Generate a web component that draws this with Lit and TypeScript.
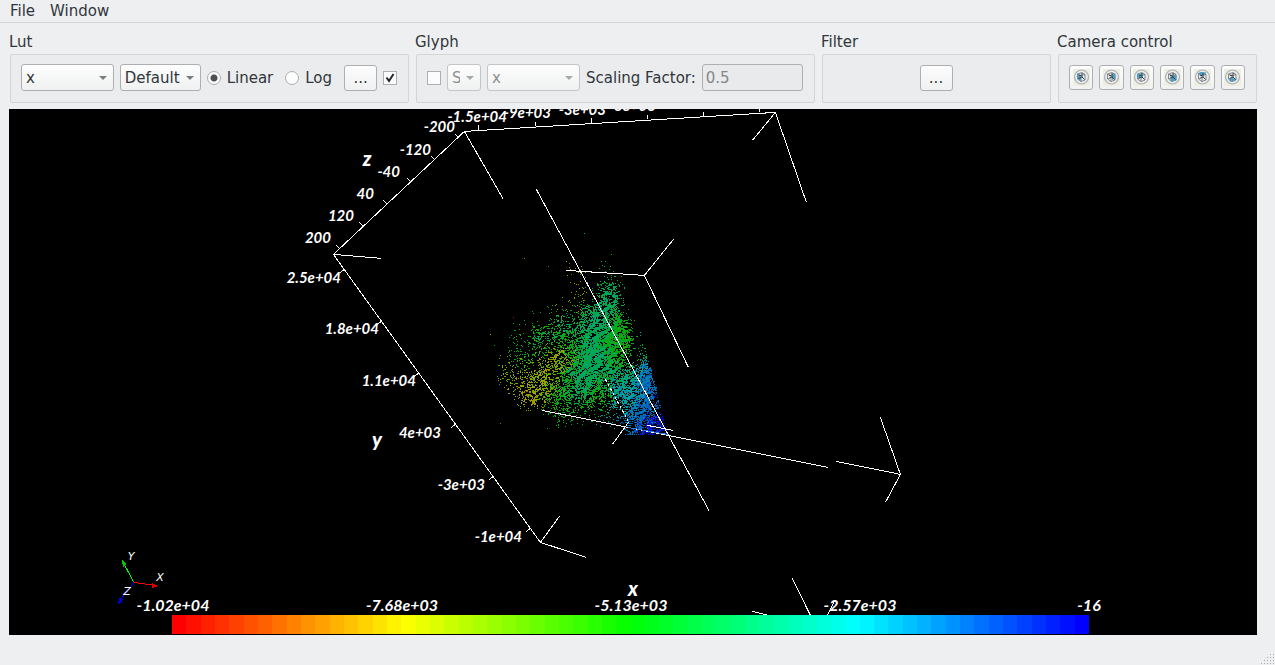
import { LitElement, html, svg, css } from "lit";
import { customElement } from "lit/decorators.js";

type Segment = [number, number, number, number];
type Label = [string, number, number];

// Edges of the axes cube, in viewport units.
const EDGES: Segment[] = [
  [333, 254, 464, 131], [464, 131, 775, 112], [464, 131, 503, 199],
  [775, 112, 752, 140], [775, 112, 806, 202], [333, 254, 381, 258],
  [333, 254, 540, 542], [540, 542, 559, 516], [540, 542, 586, 557],
  [536, 189, 709, 511], [566, 270, 644, 275], [644, 275, 673, 239],
  [644, 275, 688, 367], [542, 410, 828, 467], [836, 461, 900, 474],
  [900, 474, 880, 417], [900, 474, 885, 502], [628, 422, 612, 444],
  [647, 425, 673, 430], [792, 578, 810, 615], [752, 611, 768, 615],
  [834, 601, 827, 615],
];

const TICKS: Segment[] = [
  [478, 125, 478, 130], [535, 122, 535, 126], [591, 118, 591, 123],
  [647, 115, 647, 119], [703, 112, 703, 116], [759, 108, 759, 112],
  [455, 134, 458, 137], [431, 156, 434, 159], [407, 178, 410, 181],
  [383, 200, 387, 204], [359, 222, 363, 226], [336, 245, 340, 249],
  [340, 272, 344, 269], [377, 324, 381, 321], [414, 376, 418, 373],
  [451, 427, 455, 424], [489, 479, 493, 476], [526, 531, 530, 528],
];

// Tick labels: text, right edge, baseline.
const LABELS: Label[] = [
  ["-1.5e+04", 507, 122], ["-9e+03", 551, 118], ["-3e+03", 606, 115], ["3e+03", 656, 111],
  ["-200", 455, 132], ["-120", 431, 155], ["-40", 400, 177],
  ["40", 374, 199], ["120", 354, 221], ["200", 331, 243],
  ["2.5e+04", 341, 283], ["1.8e+04", 379, 334], ["1.1e+04", 416, 386],
  ["4e+03", 441, 438], ["-3e+03", 485, 490], ["-1e+04", 522, 542],
];

// Colour bar labels: text, centre, baseline.
const BAR_LABELS: Label[] = [
  ["-1.02e+04", 173, 611], ["-7.68e+03", 402, 611], ["-5.13e+03", 631, 611],
  ["-2.57e+03", 860, 611], ["-16", 1089, 611],
];

const TITLES: Label[] = [["z", 367, 166], ["y", 377, 447], ["x", 633, 596]];

// Particle density and dominant colour on a 10-unit grid whose origin is (480, 225).
const CELL = 10;
const DENSITY = [
  "0000000000000000000",
  "0000000000000000000",
  "0000000000000000000",
  "0000000010102000000",
  "0000000102212000000",
  "0000000012203200000",
  "0000000112326500000",
  "0000000122337600000",
  "0000011233567620000",
  "0000112444677740000",
  "0002145555788870000",
  "0103254555888881000",
  "0013344566888850400",
  "0024434667888741610",
  "0034445567888765820",
  "0034466567876677960",
  "0013566666766787960",
  "0002564565655666850",
  "0000232443323357753",
  "0000000332233357775",
  "0000000001000037777",
];
const TONES = [
  "ggggggggggggggggggg",
  "ggggggggggggggggggg",
  "ggggggggggggggggggg",
  "ggggggggyyytttttttt",
  "gggggggggyytttttttt",
  "gggggggggyygttttttt",
  "gggggggyyyygttttttt",
  "gggggggyyygttttgggg",
  "ggggggggygttttggggg",
  "gggggggttgtttgggggg",
  "gggggggtgttttgggggg",
  "gggggtggggttggggggg",
  "gggggggyggtttggggcc",
  "lllgglyyygtttgggcbb",
  "yylyllylgttttgtcbbb",
  "yylyyyylgtttgctcbbb",
  "ooyyyylggttggcccbbb",
  "ooyyoylggtgggcccbbd",
  "oooyyygggggggccbbbd",
  "ooyyyggggggcccbbbdd",
  "ggggggggggggccbbddd",
];
const COVERAGE = [0, 0.014, 0.05, 0.14, 0.28, 0.42, 0.58, 0.74, 0.9, 1];
const PALETTE: Record<string, string[]> = {
  o: ["#a87800", "#a86000", "#9a9400"],
  y: ["#a8a400", "#96a800", "#a88c00", "#5fa800"],
  l: ["#6fa800", "#30a800", "#8ca800"],
  g: ["#00a800", "#08a818", "#00a830", "#20a800"],
  t: ["#00a84c", "#00a860", "#00a838", "#00a474"],
  c: ["#00a4a0", "#009cac", "#00a88c", "#0084b4"],
  b: ["#0070b8", "#0060b8", "#0080b8", "#0050c0"],
  d: ["#0010c8", "#0028c0", "#0000dc"],
};

function buildParticles(): Map<string, string> {
  let seed = 20817;
  const random = () => {
    seed = (Math.imul(seed, 1664525) + 1013904223) >>> 0;
    return seed / 4294967296;
  };
  const level = (c: number, r: number) => COVERAGE[Number(DENSITY[r]?.[c] ?? 0)];
  const paths = new Map<string, string>();
  const rows = DENSITY.length;
  const cols = DENSITY[0].length;
  for (let y = 0; y < rows * CELL; y++) {
    for (let x = 0; x < cols * CELL; x++) {
      const gx = x / CELL - 0.5;
      const gy = y / CELL - 0.5;
      const c = Math.floor(gx);
      const r = Math.floor(gy);
      const fx = gx - c;
      const fy = gy - r;
      const density =
        (level(c, r) * (1 - fx) + level(c + 1, r) * fx) * (1 - fy) +
        (level(c, r + 1) * (1 - fx) + level(c + 1, r + 1) * fx) * fy;
      const streak = 0.85 + 0.3 * Math.sin((x + y) * 0.55 + Math.sin(y * 0.3) * 2);
      if (x > 130 && y > 209) continue;
      // The cloud narrows to a straight edge on its right-hand side.
      if (y > 120 && x > 172 + (y - 150) * 0.25) continue;
      if (random() > density * streak) continue;
      const tr = Math.min(rows - 1, Math.max(0, Math.floor(gy + 0.5 + (random() - 0.5) * 1.6)));
      const tc = Math.min(cols - 1, Math.max(0, Math.floor(gx + 0.5 + (random() - 0.5) * 1.6)));
      const shades = PALETTE[TONES[tr][tc]];
      const shade = shades[Math.floor(random() * shades.length)];
      const w = random() < density * 0.5 ? 2 : 1;
      paths.set(shade, (paths.get(shade) ?? "") + `M${480 + x} ${225 + y}h${w}v1h-${w}z`);
    }
  }
  for (const [x, y, shade] of [
    [584, 233, "#00a838"], [524, 258, "#a87800"], [513, 317, "#a81000"], [490, 334, "#96a800"],
    [500, 423, "#a86000"], [640, 332, "#00a4a0"], [640, 335, "#00a4a0"], [494, 345, "#00a800"],
  ] as [number, number, string][]) {
    paths.set(shade, (paths.get(shade) ?? "") + `M${x} ${y}h1v1h-1z`);
  }
  return paths;
}

const PARTICLES = [...buildParticles()];
const BANDS = Array.from({ length: 64 }, (_, i) => `hsl(${(240 * i) / 63} 100% 50%)`);

const lines = (segments: Segment[]) =>
  segments.map(([a, b, c, d]) => `M${a} ${b}L${c} ${d}`).join("");

@customElement("particle-view")
export class ParticleView extends LitElement {
  static styles = css`
    :host { display: flex; background: #000; overflow: hidden; }
    .scene { flex: 1; width: 100%; height: 100%; display: block; }
    .line { fill: none; stroke: #fff; shape-rendering: crispEdges; }
    .dots { shape-rendering: crispEdges; }
    .label { font: italic 700 15px Lato, sans-serif; fill: #fff; text-anchor: end; }
    .label.bar { font-size: 16px; text-anchor: middle; }
    .title { font: italic 900 20px Lato, sans-serif; fill: #fff; text-anchor: middle; }
    .axis { font: italic 11px "DejaVu Sans", sans-serif; fill: #fff; text-anchor: middle; }
  `;

  render() {
    return html`
      <svg class="scene" viewBox="9 109 1248 526" preserveAspectRatio="xMidYMid meet" role="img" aria-label="Particles coloured by x">
        ${PARTICLES.map(([shade, d]) => svg`<path class="dots" fill=${shade} d=${d} />`)}
        <path class="line" transform="translate(.4 .4)" d=${lines(EDGES) + lines(TICKS)} />
        <path class="line" transform="translate(.4 .4)" stroke-dasharray="3 2" d="M605 379L628 421" />
        <path d="M628 427.500L668 434.500" stroke="#2f7fe0" fill="none" shape-rendering="crispEdges" />
        ${BANDS.map((fill, i) => {
          const from = Math.round(172 + (i * 917) / 64);
          const to = Math.round(172 + ((i + 1) * 917) / 64);
          return svg`<rect x=${from} y="615" width=${to - from} height="19" fill=${fill} />`;
        })}
        ${LABELS.map(([t, x, y]) => svg`<text class="label" x=${x} y=${y}>${t}</text>`)}
        ${BAR_LABELS.map(([t, x, y]) => svg`<text class="label bar" x=${x} y=${y}>${t}</text>`)}
        ${TITLES.map(([t, x, y]) => svg`<text class="title" x=${x} y=${y}>${t}</text>`)}
        <g shape-rendering="crispEdges">
          <path d="M134 582.500L124 564" stroke="#0f0" />
          <path d="M122 560l5 4-4 3z" fill="#00c800" />
          <path d="M134 582.500L153 585" stroke="#f00" />
          <path d="M152 583l6 3-6 2z" fill="#d80000" />
          <path d="M134 582.500L121 599" stroke="#00f" />
          <path d="M119 598l4 1-1 3-4 2z" fill="#0000d8" />
        </g>
        <text class="axis" x="131" y="560">Y</text>
        <text class="axis" x="160" y="581">X</text>
        <text class="axis" x="127" y="595">Z</text>
      </svg>
    `;
  }
}

const CAMERA_VIEWS = [
  { name: "View along +X", face: "M4.500 4L8 6.500V12L4.500 10Z" },
  { name: "View along -X", face: "M9 5L12.500 4.500V9.500L9 11Z" },
  { name: "View along +Y", face: "M4 5L9.500 4V8.500L4 9.500Z" },
  { name: "View along -Y", face: "M6.500 7L12.500 6V11.500L6.500 12.500Z" },
  { name: "View along +Z", face: "M3.500 4.500L6.500 3L12.500 3.500L10.500 6H6Z" },
  { name: "View along -Z", face: "M4.500 10L8 9L12.500 10L9.500 12.500H6Z" },
];

@customElement("app-root")
export class AppRoot extends LitElement {
  static styles = css`
    :host {
      display: flex;
      flex-direction: column;
      min-height: 100vh;
      background: #eeeff1;
      color: #31363b;
      font: 15px/18px "DejaVu Sans", sans-serif;
    }
    * { box-sizing: border-box; }
    .menu { display: flex; gap: 15px; padding: 2px 10px; border-bottom: 1px solid #d3d5d7; }
    .menu-item { border: 0; padding: 0; background: none; color: inherit; font: inherit; }
    .tools { display: flex; gap: 7px; padding: 10px 18px 6px 10px; }
    .group { flex: 199 1 0; min-width: 0; margin: 0; padding: 0; border: 0; }
    .group.wide { flex-grow: 399; }
    .group.medium { flex-grow: 229; }
    .caption { display: block; margin: 0 0 3px -1px; }
    .frame {
      display: flex;
      align-items: center;
      gap: 6px;
      height: 49px;
      padding: 0 11px 2px 10px;
      border: 1px solid #d3d5d6;
      border-radius: 2px;
      background: #ebecee;
    }
    .frame.centred { justify-content: center; }
    .combo { display: grid; align-items: center; height: 27px; }
    .combo::after {
      content: "";
      grid-area: 1 / 1;
      justify-self: end;
      margin-right: 7px;
      border: 4px solid transparent;
      border-top-color: #7b7e81;
      border-bottom: 0;
      pointer-events: none;
    }
    .combo.off::after { border-top-color: #a6a8aa; }
    .select {
      grid-area: 1 / 1;
      appearance: none;
      width: 100%;
      height: 27px;
      padding: 0 20px 0 4px;
      overflow: hidden;
      text-overflow: clip;
    }
    .select, .button {
      border: 1px solid #adafb1;
      border-radius: 3px;
      background: linear-gradient(#fdfdfd, #f0f1f1);
      color: inherit;
      font: inherit;
    }
    .select:disabled { border-color: #c3c5c7; color: #8b8e90; opacity: 1; }
    .field { width: 93px; }
    .scheme { width: 81px; }
    .shape { width: 34px; }
    .button { width: 33px; height: 26px; padding: 0; }
    .button.icon { display: grid; place-items: center; width: 25px; height: 25px; }
    .choice { display: flex; align-items: center; gap: 6px; margin-right: 6px; }
    .radio, .check {
      appearance: none;
      flex: none;
      width: 14px;
      height: 14px;
      margin: 0;
      border: 1px solid #adafb1;
      background: #fcfcfc;
    }
    .radio { border-radius: 50%; }
    .radio:checked { background: radial-gradient(circle, #4d5155 0 3px, #fcfcfc 4px); }
    .tick { display: grid; }
    .tick .check, .mark { grid-area: 1 / 1; }
    .mark { pointer-events: none; }
    .factor { display: flex; flex: 1; align-items: center; gap: 6px; min-width: 0; }
    .factor-label { flex: none; }
    .number {
      flex: 1;
      min-width: 0;
      height: 27px;
      padding: 0 3px;
      border: 1px solid #adafb1;
      border-radius: 3px;
      background: #e9eaeb;
      color: #858789;
      font: inherit;
    }
    .cameras { justify-content: space-between; }
    .view { flex: 1 0 526px; margin: 0 18px 0 9px; }
    .status { display: flex; justify-content: flex-end; align-items: flex-end; height: 30px; }
    .grip { display: block; }
  `;

  private combo(label: string, value: string, size: string, disabled = false) {
    return html`
      <span class="combo ${size} ${disabled ? "off" : ""}">
        <select class="select" aria-label=${label} ?disabled=${disabled}><option>${value}</option></select>
      </span>
    `;
  }

  private cameraButton(view: { name: string; face: string }) {
    return html`
      <button class="button icon" aria-label=${view.name}>
        <svg width="17" height="17" viewBox="0 0 17 17" fill="none">
          <path fill="#efeee2" d="M0 0h17v17H0z" />
          <circle cx="8.500" cy="8" r="7" fill="#e9ebec" stroke="#aeb0b1" stroke-width="1.200" />
          <path stroke="#6b7073" stroke-width=".8" d="M4.500 5L8 6.500L12 5.500M8 6.500V12.500M4.500 5V10L8 12.500L12 11V5.500L9 3.500L4.500 5" />
          <path fill="#4f9dc2" d=${view.face} />
          <path stroke="#3c4245" d="M9 4V8L5.500 9.500M9 8L11.500 10.500M6 6.500H8" />
        </svg>
      </button>
    `;
  }

  render() {
    const dots: [number, number][] = [];
    for (let row = 0; row < 4; row++) {
      for (let i = 0; i <= row + 1; i++) dots.push([13 - i * 3, row * 3]);
    }
    return html`
      <nav class="menu">
        <button class="menu-item">File</button>
        <button class="menu-item">Window</button>
      </nav>
      <div class="tools">
        <section class="group wide" aria-label="Lut">
          <span class="caption">Lut</span>
          <div class="frame">
            ${this.combo("Lut field", "x", "field")}
            ${this.combo("Colour scheme", "Default", "scheme")}
            <label class="choice"><input class="radio" type="radio" name="scale" checked />Linear</label>
            <label class="choice"><input class="radio" type="radio" name="scale" />Log</label>
            <button class="button" aria-label="Lut range">...</button>
            <span class="tick">
              <input class="check" type="checkbox" aria-label="Show colour bar" checked />
              <svg class="mark" width="14" height="14" viewBox="0 0 14 14" fill="none" stroke="#232629" stroke-width="2"><path d="M3.500 6.500L6 10L10.500 3" /></svg>
            </span>
          </div>
        </section>
        <section class="group wide" aria-label="Glyph">
          <span class="caption">Glyph</span>
          <div class="frame">
            <input class="check" type="checkbox" aria-label="Enable glyphs" />
            ${this.combo("Glyph shape", "Sphere", "shape", true)}
            ${this.combo("Glyph field", "x", "field", true)}
            <div class="factor">
              <label class="factor-label" for="factor">Scaling Factor:</label>
              <input class="number" id="factor" type="text" value="0.5" disabled />
            </div>
          </div>
        </section>
        <section class="group medium" aria-label="Filter">
          <span class="caption">Filter</span>
          <div class="frame centred"><button class="button" aria-label="Edit filter">...</button></div>
        </section>
        <section class="group" aria-label="Camera control">
          <span class="caption">Camera control</span>
          <div class="frame cameras">${CAMERA_VIEWS.map((v) => this.cameraButton(v))}</div>
        </section>
      </div>
      <particle-view class="view"></particle-view>
      <footer class="status">
        <svg class="grip" width="15" height="11" viewBox="0 0 15 11" aria-hidden="true">
          ${dots.map(([x, y]) => svg`<rect x=${x} y=${y} width="1" height="1" fill="#a9abad" />`)}
        </svg>
      </footer>
    `;
  }
}
